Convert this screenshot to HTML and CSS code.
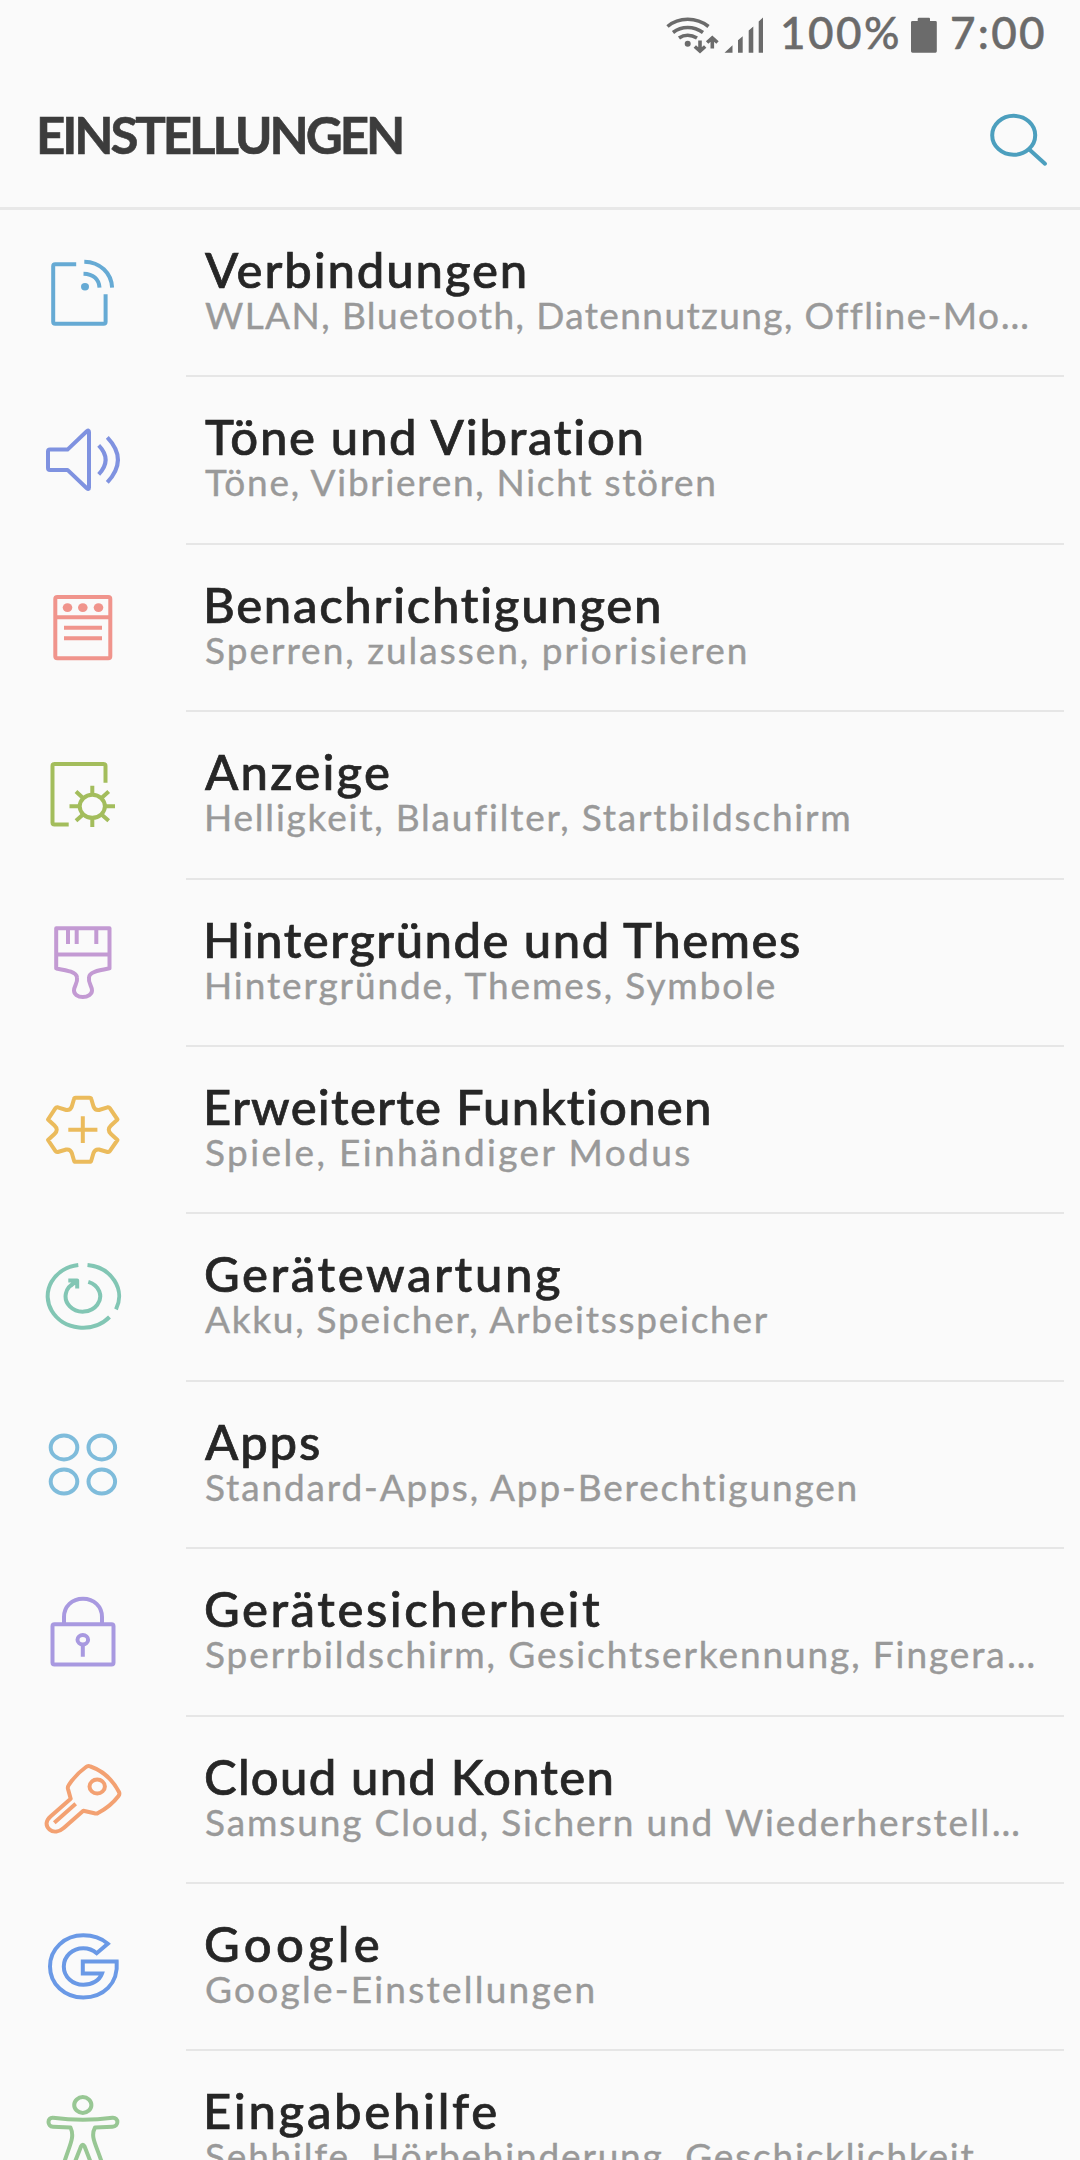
FILE: index.html
```html
<!DOCTYPE html>
<html lang="de">
<head>
  <meta charset="UTF-8" />
  <meta name="viewport" content="width=device-width, initial-scale=1.0"/>
  <title>Einstellungen</title>
  <link rel="stylesheet" href="styles.css">
</head>
<body>
  <div class="statusbar">
    <svg class="signal" width="102" height="60" viewBox="664 0 102 60">
      <g fill="none" stroke="#6b6b6b" stroke-width="3.6">
        <path d="M667.5 26.5Q676 19.3 687.7 19.3T708.5 26.5"/>
        <path d="M673 32.5Q679.500 27.500 687.700 27.500T703 32.500"/>
        <path d="M679 38Q683 35.200 687.700 35.200T697 38"/>
        <path d="M700 40.500V50M694.800 46.500L700 51L705.200 46.500M712.300 48.500V39M707.100 42.500L712.300 38L717.500 42.500"/>
      </g>
      <g fill="#6b6b6b">
        <circle cx="687.700" cy="43.700" r="3"/>
        <path d="M724.500 52.700L732.500 45.300V52.700ZM738 52.700V40.200L742.700 36.200V52.700ZM748.700 52.700V30.500L753.300 26.500V52.700ZM758.700 52.700V21.500L763 17.500V52.700Z"/>
      </g>
    </svg>
    <span class="percent">100%</span>
    <svg class="battery" width="26" height="60" viewBox="911 0 26 60">
      <path fill="#6b6b6b" d="M912.500 21H917.700V19Q917.700 17.700 919 17.700H929Q930 17.700 930 19V21H935.500Q936.800 21 936.800 22.300V51.300Q936.800 52.700 935.500 52.700H912.500Q911 52.700 911 51.300V22.300Q911 21 912.500 21Z"/>
    </svg>
    <span class="clock">7:00</span>
  </div>

  <div class="header">
    <h1>EINSTELLUNGEN</h1>
    <svg class="search" width="60" height="60" viewBox="988 108 60 60">
      <ellipse cx="1013.700" cy="135.300" rx="21.500" ry="19.500"/>
      <path d="M1029.300 149.500L1045 163.700"/>
    </svg>
  </div>

  <div class="list">
    <div class="row connections">
      <svg class="icon" viewBox="0 0 100 100">
        <path d="M44.200 21.300H23.200Q21.200 21.300 21.200 23.300V78.700Q21.200 80.700 23.200 80.700H71.600Q73.600 80.700 73.600 78.700V51.300M52.300 18.700C68 19 79.500 30 80.100 44.700M51.500 30.700C61 31 67 36 67.500 44.700"/>
        <ellipse class="dot" cx="53" cy="43.700" rx="4" ry="3.700"/>
      </svg>
      <div class="text"><div class="title">Verbindungen</div><div class="sub">WLAN, Bluetooth, Datennutzung, Offline-Mo<span class="more">…</span></div></div>
    </div>
    <div class="row sounds">
      <svg class="icon" viewBox="0 0 100 100">
        <path d="M18 39.600H35.500L54.800 21.300Q57 19.500 57 22V77.500Q57 80 54.800 78.200L35.500 59.900H18Q16 59.900 16 57.900V41.600Q16 39.600 18 39.600ZM66.700 35.300Q80.500 49.600 66.700 64.300M75.300 27.300Q96.500 49.600 75.300 72.300"/>
      </svg>
      <div class="text"><div class="title">Töne und Vibration</div><div class="sub">Töne, Vibrieren, Nicht stören</div></div>
    </div>
    <div class="row notifications">
      <svg class="icon" viewBox="0 0 100 100">
        <rect x="23.300" y="19" width="55" height="61.300" rx="2"/>
        <path d="M23 39.300H78M32 49.700H70M32 60.300H70"/>
        <g class="dot"><ellipse cx="35.500" cy="29.600" rx="4.800" ry="4.400"/><ellipse cx="50.800" cy="29.600" rx="4.800" ry="4.400"/><ellipse cx="66.500" cy="29.600" rx="4.800" ry="4.400"/></g>
      </svg>
      <div class="text"><div class="title">Benachrichtigungen</div><div class="sub">Sperren, zulassen, priorisieren</div></div>
    </div>
    <div class="row display">
      <svg class="icon" viewBox="0 0 100 100">
        <path d="M36.700 79.500H22.500Q20.500 79.500 20.500 77.500V21.100Q20.500 19.100 22.500 19.100H71.500Q73.500 19.100 73.500 21.100V37.800"/>
        <ellipse cx="60.300" cy="61.300" rx="12.600" ry="11.500"/>
        <path d="M37.500 61.300H47.500M73 61.300H83M60.300 40.700V49.800M60.300 73V82M44 46.500L51 53M76.700 46.500L69.500 53M44 75.800L51 69.500M76.700 75.800L69.500 69.500"/>
      </svg>
      <div class="text"><div class="title">Anzeige</div><div class="sub">Helligkeit, Blaufilter, Startbildschirm</div></div>
    </div>
    <div class="row themes">
      <svg class="icon" viewBox="0 0 100 100">
        <path d="M24.200 15.200H77.500V55.400C66 57.500 57 59 57 64.500C56 70 60 73 60 77.500C60 81 56 84 50.800 84C45.500 84 42 81 42 77.500C42 73 46 70 45 64.500C44.500 59 36 57.500 24.200 55.400ZM24 41.500H77.500M36 15V31M44.700 15V31M64.300 15V31"/>
      </svg>
      <div class="text"><div class="title">Hintergründe und Themes</div><div class="sub">Hintergründe, Themes, Symbole</div></div>
    </div>
    <div class="row advanced">
      <svg class="icon" viewBox="0 0 100 100">
        <path d="M43.500 17.700H57.500Q59 17.700 59.300 19L61.500 26.500Q63 30.500 67 30L75.500 27.300Q77 27 77.800 28.200L85.500 39.500L79 45.500Q74.500 49.700 79 54L85.500 60L77.800 71.200Q77 72.400 75.500 72L67 69.500Q63 69 61.500 73L59.300 80.500Q59 81.800 57.500 81.800H43.500Q42.300 81.800 42 80.500L39.800 73Q38.300 69 34.300 69.500L25.800 72Q24.300 72.400 23.500 71.200L16 60L22.500 54Q27 49.700 22.500 45.500L16 39.500L23.500 28.200Q24.300 27 25.800 27.300L34.300 30Q38.300 30.500 39.800 26.500L42 19Q42.300 17.700 43.500 17.700ZM36.300 49.800H65.400M50.800 36.300V63"/>
      </svg>
      <div class="text"><div class="title">Erweiterte Funktionen</div><div class="sub">Spiele, Einhändiger Modus</div></div>
    </div>
    <div class="row maintenance">
      <svg class="icon" viewBox="0 0 100 100">
        <path d="M46.300 18A35.300 31.500 0 1 0 77.500 70M55.500 18A35.300 31.500 0 0 1 84 62.300M56.300 34.800A17.300 15.300 0 1 1 43.500 35.500M36.300 33.500H45.200V41.500M38.500 39L45 33.500"/>
      </svg>
      <div class="text"><div class="title">Gerätewartung</div><div class="sub">Akku, Speicher, Arbeitsspeicher</div></div>
    </div>
    <div class="row apps">
      <svg class="icon" viewBox="0 0 100 100">
        <ellipse cx="32" cy="32.400" rx="13.300" ry="12"/><ellipse cx="69.800" cy="32.400" rx="13.300" ry="12"/>
        <ellipse cx="32" cy="66.600" rx="13.300" ry="12"/><ellipse cx="69.800" cy="66.600" rx="13.300" ry="12"/>
      </svg>
      <div class="text"><div class="title">Apps</div><div class="sub">Standard-Apps, App-Berechtigungen</div></div>
    </div>
    <div class="row security">
      <svg class="icon" viewBox="0 0 100 100">
        <rect x="20.500" y="42.200" width="61" height="40.300" rx="2"/>
        <path d="M32 42V35C32 24.500 40 16.700 51 16.700S70 24.500 70 35V42M50.800 62.500V74.800"/>
        <ellipse cx="50.800" cy="57.700" rx="5.300" ry="4.700"/>
      </svg>
      <div class="text"><div class="title">Gerätesicherheit</div><div class="sub">Sperrbildschirm, Gesichtserkennung, Fingera<span class="more">…</span></div></div>
    </div>
    <div class="row cloud">
      <svg class="icon" viewBox="0 0 100 100">
        <path d="M54 17Q56 15.300 58.500 16.500Q77 23 87 42Q88 44 86.500 46Q78.500 56.500 66 63Q64.500 64 62.500 63.300L51.300 60.700L32 77.700C27 82 21.500 83 17.500 79.500C13 75.500 14 70.500 18.500 66.500L38.700 48.700L36 39Q35.500 37 36.500 35.500Q43 25 54 17ZM22.300 72.700L43.700 53.700"/>
        <ellipse cx="65.200" cy="36.500" rx="7.700" ry="6.900"/>
      </svg>
      <div class="text"><div class="title">Cloud und Konten</div><div class="sub">Samsung Cloud, Sichern und Wiederherstell<span class="more">…</span></div></div>
    </div>
    <div class="row google">
      <svg class="icon" viewBox="0 0 100 100">
        <path stroke-linejoin="miter" d="M75.800 26.700C69.500 21.300 61 18.300 51.300 18.300C32.500 18.300 18 32 18 49.500S32.500 80.500 51.300 80.500C71 80.500 86.500 67 84.700 44.500H50.800V56.500H70C67.500 63.500 60 67.800 51.300 67.800C40.500 67.800 31.800 59.800 31.800 49.500S40.500 31.200 51.300 31.200C56.500 31.200 61 33 64.700 36.200Z"/>
      </svg>
      <div class="text"><div class="title">Google</div><div class="sub">Google-Einstellungen</div></div>
    </div>
    <div class="row accessibility">
      <svg class="icon" viewBox="0 0 100 100">
        <ellipse cx="50.800" cy="21" rx="8.600" ry="7.900"/>
        <path d="M21 33.800Q51 37.500 80.500 33.800C87 33.300 87 42.500 80.500 42.800L63 43.500C58 53 64 60 70 79M21 33.800C15 33.300 15 42.500 21 42.800L38.500 43.500C43 53 38 60 32 79M42.500 79L49 62.500Q50.800 59 52.600 62.500L59 79"/>
      </svg>
      <div class="text"><div class="title">Eingabehilfe</div><div class="sub">Sehhilfe, Hörbehinderung, Geschicklichkeit</div></div>
    </div>
  </div>
</body>
</html>
```
FILE: styles.css
```css
* {
  box-sizing: border-box;
}
body {
  margin: 0;
  height: 2160px;
  overflow: hidden;
  background: #fafafa;
  font-family: Lato, "Open Sans", sans-serif;
}
svg {
  display: block;
  flex-shrink: 0;
}

/* status bar */
.statusbar {
  display: flex;
  justify-content: flex-end;
  height: 64px;
  padding-right: 34px;
  font-size: 44px;
  font-weight: 500;
  line-height: 52px;
  color: #6b6b6b;
  -webkit-text-stroke: 0.5px;
}
.statusbar span {
  padding-top: 6px;
  white-space: nowrap;
}
.percent {
  width: 131px;
  margin-left: 14px;
  letter-spacing: 2.5px;
}
.clock {
  width: 96px;
  margin-left: 13px;
  letter-spacing: 2.3px;
}

/* title bar */
.header {
  display: flex;
  justify-content: space-between;
  align-items: flex-start;
  height: 146px;
  padding: 41px 32px 0 36px;
  border-bottom: 3px solid #e8e8e8;
}
h1 {
  margin: 0;
  font-size: 51px;
  font-weight: 700;
  line-height: 60px;
  letter-spacing: -3.1px;
  color: #3c3c3c;
  -webkit-text-stroke: 0.6px;
}
.search {
  margin-top: 3px;
  fill: none;
  stroke: #4c9fbe;
  stroke-width: 4;
  stroke-linecap: round;
}

/* settings list */
.row {
  display: flex;
  height: 167.4px;
}
.icon {
  width: 100px;
  height: 100px;
  margin: 33px 54px 0 32px;
  fill: none;
  stroke: currentColor;
  stroke-width: 4;
  stroke-linejoin: round;
}
.dot {
  fill: currentColor;
  stroke: none;
}
.text {
  width: 878px;
  padding: 34px 0 0 19px;
  border-bottom: 2px solid #e6e6e6;
  white-space: nowrap;
}
.title {
  font-size: 49px;
  font-weight: 500;
  line-height: 50px;
  color: #262626;
  -webkit-text-stroke: 0.7px;
}
.sub {
  margin-top: 1px;
  font-size: 37px;
  line-height: 40px;
  color: #999;
  -webkit-text-stroke: 0.4px;
}
.more {
  font-family: "Noto Sans", sans-serif;
  line-height: 1;
}

/* icon colour and tracking of each row */
.connections { color: #66aad4; }
.connections .title { letter-spacing: 1.9px; }
.connections .sub { letter-spacing: 1.4px; }
.sounds { color: #7f92e0; }
.sounds .title { letter-spacing: 1.72px; }
.sounds .sub { letter-spacing: 1.7px; }
.notifications { color: #f0948c; }
.notifications .title { letter-spacing: 1.72px; margin-left: -2px; }
.notifications .sub { letter-spacing: 2px; }
.display { color: #a3bd5c; }
.display .title { letter-spacing: 2.24px; }
.display .sub { letter-spacing: 1.8px; margin-left: -1px; }
.themes { color: #c39ad3; }
.themes .title { letter-spacing: 1.5px; margin-left: -2px; }
.themes .sub { letter-spacing: 1.9px; margin-left: -1px; }
.advanced { color: #ebbb5c; }
.advanced .title { letter-spacing: 1.25px; margin-left: -2px; }
.advanced .sub { letter-spacing: 2.39px; }
.maintenance { color: #82c6b4; }
.maintenance .title { letter-spacing: 2.6px; margin-left: -1px; }
.maintenance .sub { letter-spacing: 1.75px; }
.apps { color: #7fbcdb; }
.apps .title { letter-spacing: 1.86px; }
.apps .sub { letter-spacing: 1.87px; }
.security { color: #a899e0; }
.security .title { letter-spacing: 2.54px; margin-left: -1px; }
.security .sub { letter-spacing: 1.9px; }
.cloud { color: #f3a172; }
.cloud .title { letter-spacing: 1.25px; margin-left: -1px; }
.cloud .sub { letter-spacing: 1.87px; }
.google { color: #6a99e6; }
.google .title { letter-spacing: 4.3px; margin-left: -1px; }
.google .sub { letter-spacing: 2.25px; }
.accessibility { color: #98c794; }
.accessibility .title { letter-spacing: 2.7px; margin-left: -2px; }
.accessibility .sub { letter-spacing: 1.82px; }
```
